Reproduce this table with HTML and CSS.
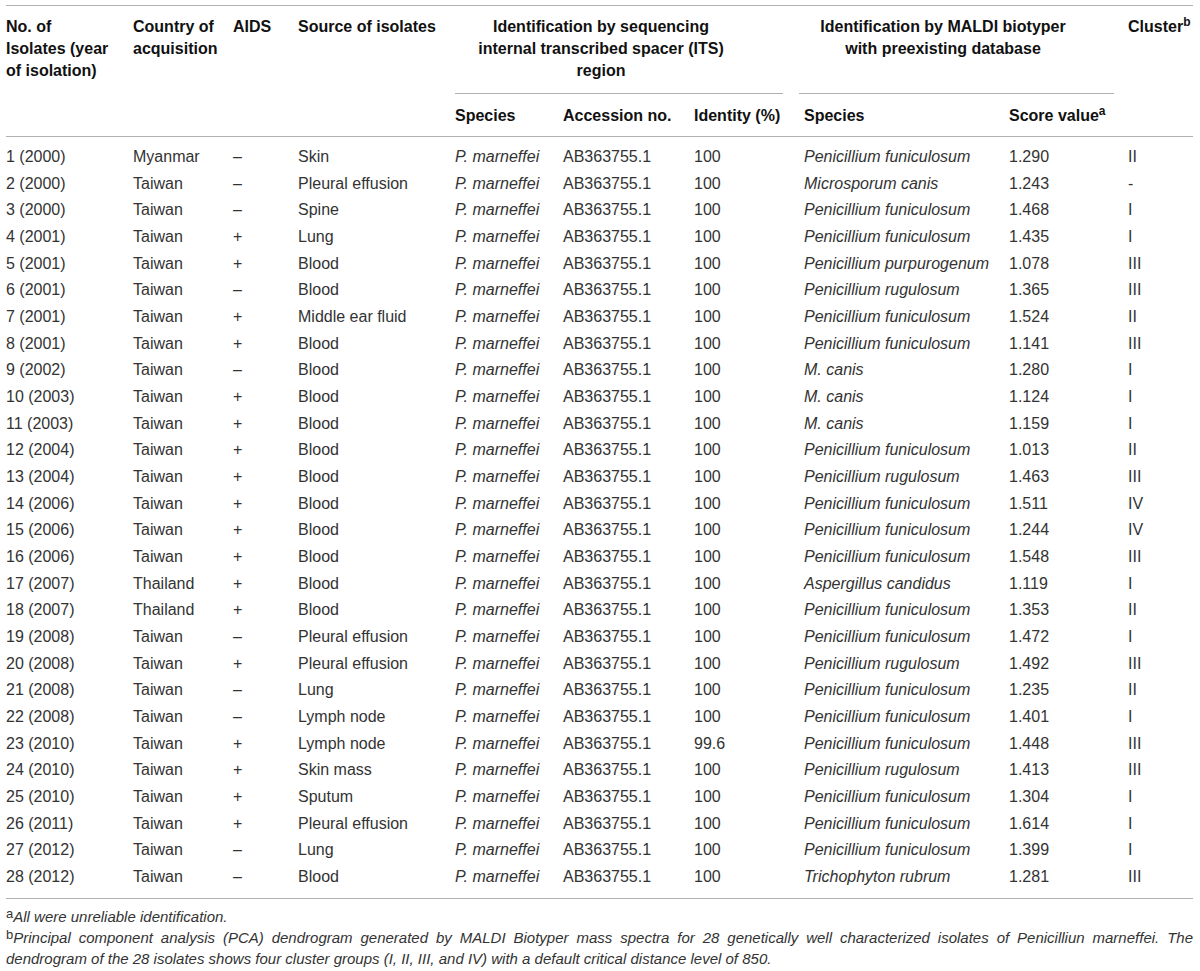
FILE: index.html
```html
<!DOCTYPE html>
<html>
<head>
    <title>Identification of Penicillium marneffei isolates</title>
    <link rel="stylesheet" href="styles.css">
</head>
<body>
    <div class="table-wrap">
        <table class="isolates">
            <colgroup>
                <col class="c-no">
                <col class="c-country">
                <col class="c-aids">
                <col class="c-source">
                <col class="c-species">
                <col class="c-acc">
                <col class="c-ident">
                <col class="c-mspecies">
                <col class="c-score">
                <col class="c-cluster">
            </colgroup>
            <thead>
                <tr class="head-top">
                    <th rowspan="2">No. of<br>Isolates (year<br>of isolation)</th>
                    <th rowspan="2">Country of<br>acquisition</th>
                    <th rowspan="2">AIDS</th>
                    <th rowspan="2">Source of isolates</th>
                    <th colspan="3" class="group">
                        <div class="group-text its">Identification by sequencing<br>internal transcribed spacer (ITS)<br>region</div>
                    </th>
                    <th colspan="2" class="group">
                        <div class="group-text maldi">Identification by MALDI biotyper<br>with preexisting database</div>
                    </th>
                    <th rowspan="2">Cluster<sup>b</sup></th>
                </tr>
                <tr class="head-sub">
                    <th>Species</th>
                    <th>Accession no.</th>
                    <th>Identity (%)</th>
                    <th>Species</th>
                    <th>Score value<sup>a</sup></th>
                </tr>
            </thead>
            <tbody>
                <tr><td>1 (2000)</td><td>Myanmar</td><td>–</td><td>Skin</td><td><i>P. marneffei</i></td><td>AB363755.1</td><td>100</td><td><i>Penicillium funiculosum</i></td><td>1.290</td><td>II</td></tr>
                <tr><td>2 (2000)</td><td>Taiwan</td><td>–</td><td>Pleural effusion</td><td><i>P. marneffei</i></td><td>AB363755.1</td><td>100</td><td><i>Microsporum canis</i></td><td>1.243</td><td>-</td></tr>
                <tr><td>3 (2000)</td><td>Taiwan</td><td>–</td><td>Spine</td><td><i>P. marneffei</i></td><td>AB363755.1</td><td>100</td><td><i>Penicillium funiculosum</i></td><td>1.468</td><td>I</td></tr>
                <tr><td>4 (2001)</td><td>Taiwan</td><td>+</td><td>Lung</td><td><i>P. marneffei</i></td><td>AB363755.1</td><td>100</td><td><i>Penicillium funiculosum</i></td><td>1.435</td><td>I</td></tr>
                <tr><td>5 (2001)</td><td>Taiwan</td><td>+</td><td>Blood</td><td><i>P. marneffei</i></td><td>AB363755.1</td><td>100</td><td><i>Penicillium purpurogenum</i></td><td>1.078</td><td>III</td></tr>
                <tr><td>6 (2001)</td><td>Taiwan</td><td>–</td><td>Blood</td><td><i>P. marneffei</i></td><td>AB363755.1</td><td>100</td><td><i>Penicillium rugulosum</i></td><td>1.365</td><td>III</td></tr>
                <tr><td>7 (2001)</td><td>Taiwan</td><td>+</td><td>Middle ear fluid</td><td><i>P. marneffei</i></td><td>AB363755.1</td><td>100</td><td><i>Penicillium funiculosum</i></td><td>1.524</td><td>II</td></tr>
                <tr><td>8 (2001)</td><td>Taiwan</td><td>+</td><td>Blood</td><td><i>P. marneffei</i></td><td>AB363755.1</td><td>100</td><td><i>Penicillium funiculosum</i></td><td>1.141</td><td>III</td></tr>
                <tr><td>9 (2002)</td><td>Taiwan</td><td>–</td><td>Blood</td><td><i>P. marneffei</i></td><td>AB363755.1</td><td>100</td><td><i>M. canis</i></td><td>1.280</td><td>I</td></tr>
                <tr><td>10 (2003)</td><td>Taiwan</td><td>+</td><td>Blood</td><td><i>P. marneffei</i></td><td>AB363755.1</td><td>100</td><td><i>M. canis</i></td><td>1.124</td><td>I</td></tr>
                <tr><td>11 (2003)</td><td>Taiwan</td><td>+</td><td>Blood</td><td><i>P. marneffei</i></td><td>AB363755.1</td><td>100</td><td><i>M. canis</i></td><td>1.159</td><td>I</td></tr>
                <tr><td>12 (2004)</td><td>Taiwan</td><td>+</td><td>Blood</td><td><i>P. marneffei</i></td><td>AB363755.1</td><td>100</td><td><i>Penicillium funiculosum</i></td><td>1.013</td><td>II</td></tr>
                <tr><td>13 (2004)</td><td>Taiwan</td><td>+</td><td>Blood</td><td><i>P. marneffei</i></td><td>AB363755.1</td><td>100</td><td><i>Penicillium rugulosum</i></td><td>1.463</td><td>III</td></tr>
                <tr><td>14 (2006)</td><td>Taiwan</td><td>+</td><td>Blood</td><td><i>P. marneffei</i></td><td>AB363755.1</td><td>100</td><td><i>Penicillium funiculosum</i></td><td>1.511</td><td>IV</td></tr>
                <tr><td>15 (2006)</td><td>Taiwan</td><td>+</td><td>Blood</td><td><i>P. marneffei</i></td><td>AB363755.1</td><td>100</td><td><i>Penicillium funiculosum</i></td><td>1.244</td><td>IV</td></tr>
                <tr><td>16 (2006)</td><td>Taiwan</td><td>+</td><td>Blood</td><td><i>P. marneffei</i></td><td>AB363755.1</td><td>100</td><td><i>Penicillium funiculosum</i></td><td>1.548</td><td>III</td></tr>
                <tr><td>17 (2007)</td><td>Thailand</td><td>+</td><td>Blood</td><td><i>P. marneffei</i></td><td>AB363755.1</td><td>100</td><td><i>Aspergillus candidus</i></td><td>1.119</td><td>I</td></tr>
                <tr><td>18 (2007)</td><td>Thailand</td><td>+</td><td>Blood</td><td><i>P. marneffei</i></td><td>AB363755.1</td><td>100</td><td><i>Penicillium funiculosum</i></td><td>1.353</td><td>II</td></tr>
                <tr><td>19 (2008)</td><td>Taiwan</td><td>–</td><td>Pleural effusion</td><td><i>P. marneffei</i></td><td>AB363755.1</td><td>100</td><td><i>Penicillium funiculosum</i></td><td>1.472</td><td>I</td></tr>
                <tr><td>20 (2008)</td><td>Taiwan</td><td>+</td><td>Pleural effusion</td><td><i>P. marneffei</i></td><td>AB363755.1</td><td>100</td><td><i>Penicillium rugulosum</i></td><td>1.492</td><td>III</td></tr>
                <tr><td>21 (2008)</td><td>Taiwan</td><td>–</td><td>Lung</td><td><i>P. marneffei</i></td><td>AB363755.1</td><td>100</td><td><i>Penicillium funiculosum</i></td><td>1.235</td><td>II</td></tr>
                <tr><td>22 (2008)</td><td>Taiwan</td><td>–</td><td>Lymph node</td><td><i>P. marneffei</i></td><td>AB363755.1</td><td>100</td><td><i>Penicillium funiculosum</i></td><td>1.401</td><td>I</td></tr>
                <tr><td>23 (2010)</td><td>Taiwan</td><td>+</td><td>Lymph node</td><td><i>P. marneffei</i></td><td>AB363755.1</td><td>99.6</td><td><i>Penicillium funiculosum</i></td><td>1.448</td><td>III</td></tr>
                <tr><td>24 (2010)</td><td>Taiwan</td><td>+</td><td>Skin mass</td><td><i>P. marneffei</i></td><td>AB363755.1</td><td>100</td><td><i>Penicillium rugulosum</i></td><td>1.413</td><td>III</td></tr>
                <tr><td>25 (2010)</td><td>Taiwan</td><td>+</td><td>Sputum</td><td><i>P. marneffei</i></td><td>AB363755.1</td><td>100</td><td><i>Penicillium funiculosum</i></td><td>1.304</td><td>I</td></tr>
                <tr><td>26 (2011)</td><td>Taiwan</td><td>+</td><td>Pleural effusion</td><td><i>P. marneffei</i></td><td>AB363755.1</td><td>100</td><td><i>Penicillium funiculosum</i></td><td>1.614</td><td>I</td></tr>
                <tr><td>27 (2012)</td><td>Taiwan</td><td>–</td><td>Lung</td><td><i>P. marneffei</i></td><td>AB363755.1</td><td>100</td><td><i>Penicillium funiculosum</i></td><td>1.399</td><td>I</td></tr>
                <tr><td>28 (2012)</td><td>Taiwan</td><td>–</td><td>Blood</td><td><i>P. marneffei</i></td><td>AB363755.1</td><td>100</td><td><i>Trichophyton rubrum</i></td><td>1.281</td><td>III</td></tr>
            </tbody>
        </table>

        <div class="notes">
            <p class="note"><sup>a</sup>All were unreliable identification.</p>
            <p class="note note-full"><sup>b</sup>Principal component analysis (PCA) dendrogram generated by MALDI Biotyper mass spectra for 28 genetically well characterized isolates of Penicilliun marneffei. The</p>
            <p class="note">dendrogram of the 28 isolates shows four cluster groups (I, II, III, and IV) with a default critical distance level of 850.</p>
        </div>
    </div>
</body>
</html>
```

FILE: styles.css
```css
body {
    margin: 5px 6px;
    font-family: "Liberation Sans", Arial, sans-serif;
    color: #333;
    background: #fff;
}
.table-wrap {
    width: 1187px;
}
.isolates {
    width: 1187px;
    table-layout: fixed;
    border-collapse: collapse;
    font-size: 16px;
}
.c-no { width: 127px; }
.c-country { width: 100px; }
.c-aids { width: 65px; }
.c-source { width: 157px; }
.c-species { width: 108px; }
.c-acc { width: 131px; }
.c-ident { width: 110px; }
.c-mspecies { width: 205px; }
.c-score { width: 119px; }
.c-cluster { width: 65px; }

.isolates thead {
    border-top: 1px solid #b0b0b0;
    border-bottom: 1px solid #b0b0b0;
}
.isolates th {
    text-align: left;
    vertical-align: top;
    padding: 0;
    font-weight: bold;
    color: #111;
    line-height: 22px;
    white-space: nowrap;
}
.head-top th {
    padding-top: 10px;
}
.head-sub th {
    padding-top: 11px;
    padding-bottom: 9px;
}
.group-text {
    height: 66px;
    padding-bottom: 11px;
    border-bottom: 1px solid #b0b0b0;
    text-align: center;
}
.group-text.its {
    margin-right: 21px;
    padding-right: 36px;
}
.group-text.maldi {
    margin-left: -5px;
    margin-right: 14px;
    padding-right: 27px;
}
.isolates sup {
    font-size: 12px;
    line-height: 0;
    vertical-align: 6px;
}

.isolates td {
    padding: 0;
    height: 26.67px;
    line-height: 26.67px;
    white-space: nowrap;
}
.isolates tbody {
    border-bottom: 1px solid #b0b0b0;
}
.isolates tbody tr:first-child td {
    padding-top: 7px;
}
.isolates tbody tr:last-child td {
    padding-bottom: 7px;
}

.notes {
    padding-top: 7px;
}
.note {
    margin: 0;
    font-size: 15px;
    font-style: italic;
    line-height: 21px;
}
.note sup {
    font-style: normal;
    font-size: 13px;
    line-height: 0;
    vertical-align: 4px;
}
.note-full {
    text-align: justify;
    text-align-last: justify;
}
```
